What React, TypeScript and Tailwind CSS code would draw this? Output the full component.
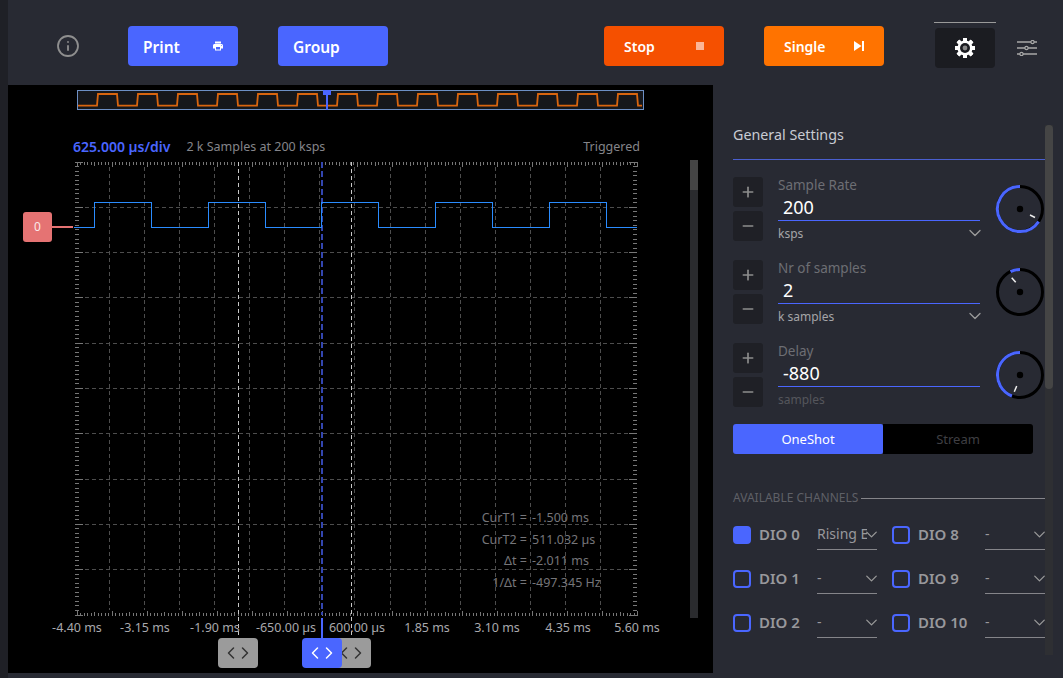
import { ChevronDown, ChevronLeft, ChevronRight, Info, Minus, Plus } from "lucide-react";
import { MdPrint } from "react-icons/md";

const font = "font-['Noto_Sans','Open_Sans',sans-serif]";

const pulseEdges = [94.5, 151.5, 208.5, 265.5, 321.5, 378.5, 435.5, 492.5, 549.5, 606.5];
const tracePath = () => {
  let d = "M74 227.5";
  pulseEdges.forEach((x, i) => {
    d += ` H${x} V${i % 2 === 0 ? 202.5 : 227.5}`;
  });
  return d + " H637";
};

const miniPath = () => {
  let d = "M78 105.7 H97";
  for (let x = 97; x < 640; x += 40) {
    d += ` L${x + 1} 94 H${x + 20} L${x + 21} 105.7 H${Math.min(x + 40, 642)}`;
  }
  return d;
};

const range = (from: number, to: number, step: number) => {
  const out: number[] = [];
  for (let v = from; v <= to + 0.01; v += step) out.push(v);
  return out;
};

const axisLabels = [
  { text: "-4.40 ms", nudge: "" },
  { text: "-3.15 ms", nudge: "-translate-x-[2px]" },
  { text: "-1.90 ms", nudge: "-translate-x-[2px]" },
  { text: "-650.00 µs", nudge: "-translate-x-px" },
  { text: "600.00 µs", nudge: "" },
  { text: "1.85 ms", nudge: "" },
  { text: "3.10 ms", nudge: "" },
  { text: "4.35 ms", nudge: "translate-x-px" },
  { text: "5.60 ms", nudge: "" },
];
const readouts = [
  ["CurT1 =", "-1.500 ms"],
  ["CurT2 =", "511.032 µs"],
  ["Δt =", "-2.011 ms"],
  ["1/Δt =", "-497.345 Hz"],
];

function Chart() {
  const xs = range(74.5, 637, 35.06);
  const ys = range(162, 615, 45.3);
  return (
    <svg width={705} height={480} viewBox="8 160 705 480" className="block">
      <g shapeRendering="crispEdges" fill="none">
        {xs.slice(1, -1).map((x) => (
          <line key={x} x1={x} x2={x} y1={167} y2={610} stroke="#4d4d4d" strokeDasharray="4 3" />
        ))}
        {ys.slice(1, -1).map((y) => (
          <line key={y} x1={78} x2={634} y1={y} y2={y} stroke="#4d4d4d" strokeDasharray="4 3" />
        ))}
        {range(0, 160, 1).map((i) => {
          const x = 77 + i * 3.506;
          const len = i % 10 === 0 ? 5 : i % 5 === 0 ? 4 : 3;
          return (
            <g key={i} stroke="#777">
              <line x1={x} x2={x} y1={162} y2={162 + len} />
              <line x1={x} x2={x} y1={615.5} y2={615.5 - len} />
            </g>
          );
        })}
        {range(0, 100, 1).map((i) => {
          const y = 162 + i * 4.53;
          const len = i % 10 === 0 ? 8 : 4;
          return (
            <g key={i} stroke="#777">
              <line x1={75} x2={75 + len} y1={y} y2={y} />
              <line x1={637} x2={637 - len} y1={y} y2={y} />
            </g>
          );
        })}
        <line x1={238.5} x2={238.5} y1={162} y2={638} stroke="#c8c8c8" strokeDasharray="4 3" />
        <line x1={351.5} x2={351.5} y1={162} y2={638} stroke="#c8c8c8" strokeDasharray="4 3" />
        <line x1={322} x2={322} y1={162} y2={615} stroke="#3346b0" strokeWidth={2} strokeDasharray="6 3" />
        <line x1={322} x2={322} y1={618} y2={638} stroke="#4a66ff" strokeWidth={2} />
      </g>
      <path d={tracePath()} fill="none" stroke="#2a8cff" strokeWidth={1} shapeRendering="crispEdges" />
    </svg>
  );
}

function MiniMap() {
  return (
    <svg width={567} height={20} viewBox="77 90 567 20" className="ml-[69px] block">
      <rect x={77.5} y={90.5} width={566} height={19} fill="#16171b" stroke="#6d8fc4" />
      <path d={miniPath()} fill="none" stroke="#d9650f" strokeWidth={1.8} />
      <rect x={323} y={90} width={8} height={5} fill="#4a66ff" />
      <line x1={327} x2={327} y1={94} y2={110} stroke="#4a66ff" strokeWidth={2} />
    </svg>
  );
}

function Handle({ className }: { className: string }) {
  return (
    <div className={`absolute top-[478px] flex h-[30px] items-center justify-center rounded-[4px] ${className}`}>
      <ChevronLeft size={20} strokeWidth={1.8} />
      <ChevronRight size={20} strokeWidth={1.8} className="-ml-[6px]" />
    </div>
  );
}

function Knob({ from, to, tick }: { from: number; to: number; tick: number[] }) {
  // angles are in degrees clockwise from the top of the dial
  const pt = (a: number) => {
    const r = (a * Math.PI) / 180;
    return `${25 + 22.5 * Math.sin(r)} ${25 - 22.5 * Math.cos(r)}`;
  };
  const large = to - from > 180 ? 1 : 0;
  return (
    <svg width={50} height={50} viewBox="0 0 50 50" className="shrink-0">
      <circle cx={25} cy={25} r={22.5} fill="none" stroke="#000" strokeWidth={3} />
      <path d={`M${pt(from)} A22.5 22.5 0 ${large} 1 ${pt(to)}`} fill="none" stroke="#4a66ff" strokeWidth={3} />
      <circle cx={25} cy={25} r={3.2} fill="#000" />
      <line x1={tick[0]} y1={tick[1]} x2={tick[2]} y2={tick[3]} stroke="#eee" strokeWidth={1.5} />
    </svg>
  );
}

function Stepper() {
  return (
    <div className="flex w-[30px] shrink-0 flex-col gap-1">
      <div className="flex h-[30px] items-center justify-center rounded-[3px] bg-[#1f2026] text-[#8d8d8d]">
        <Plus size={16} strokeWidth={2.5} />
      </div>
      <div className="flex h-[30px] items-center justify-center rounded-[3px] bg-[#1f2026] text-[#8d8d8d]">
        <Minus size={16} strokeWidth={2.5} />
      </div>
    </div>
  );
}

function NumberRow(props: { label: string; value: string; unit: string; dim?: boolean; from: number; to: number; tick: number[] }) {
  return (
    <div className="flex h-[64px] items-start">
      <Stepper />
      <div className="ml-[15px] w-[202px] pt-px">
        <div className="h-[15px] text-[13.5px] leading-[15px] text-[#6d6e74]">{props.label}</div>
        <div className="mt-[1px] h-[27px] border-b border-[#4a66ff] pl-[5px] text-[18px] leading-[26px] text-white">{props.value}</div>
        <div className="mt-[5px] flex h-[16px] items-center justify-between">
          <span className={`text-[12px] ${props.dim ? "text-[#55565c]" : "text-[#a5a5a8]"}`}>{props.unit}</span>
          {!props.dim && <ChevronDown size={20} strokeWidth={1.6} className="-mt-[3px] -mr-[5px] text-[#9a9a9a]" />}
        </div>
      </div>
      <div className="mt-[7px] ml-[15px]">
        <Knob from={props.from} to={props.to} tick={props.tick} />
      </div>
    </div>
  );
}

function Channel({ name, on, trigger, labelWidth }: { name: string; on?: boolean; trigger?: string; labelWidth: string }) {
  return (
    <div className="flex h-[30px] items-center">
      <div className={`size-[18px] shrink-0 rounded-[4px] border-2 border-[#4a66ff] ${on ? "bg-[#4a66ff]" : ""}`} />
      <span className={`ml-2 -mt-[2px] text-[15px] font-semibold whitespace-nowrap text-[#98989c] ${labelWidth}`}>{name}</span>
      <div className="relative flex h-[30px] w-[60px] shrink-0 items-center border-b border-[#85858a] text-[14px] text-[#98989c]">
        <span className="-mt-[2px] w-[50px] overflow-hidden whitespace-nowrap">{trigger ?? "-"}</span>
        <ChevronDown size={19} strokeWidth={1.6} className="absolute top-[5px] -right-[4px] text-[#9a9a9a]" />
      </div>
    </div>
  );
}

function ToolButton({ label, color, className, icon }: { label: string; color: string; className: string; icon?: React.ReactNode }) {
  return (
    <div className={`flex h-10 items-center justify-between rounded-[4px] font-semibold text-white ${color} ${className}`}>
      <span>{label}</span>
      {icon}
    </div>
  );
}

export default function App() {
  return (
    <div className={`flex h-[678px] w-[1063px] overflow-hidden bg-[#282a33] ${font}`}>
      <div className="w-2 shrink-0 bg-[#1f2026]" />
      <div className="flex min-w-0 flex-1 flex-col">
        <header className="flex h-[85px] shrink-0 items-center pt-[7px]">
          <Info size={24} strokeWidth={1.8} className="ml-[48px] text-[#8f8f8f]" />
          <ToolButton
            label="Print"
            color="bg-[#4a66ff]"
            className="ml-[48px] w-[110px] pr-[14px] pl-[15px] text-[15.5px] [&>span]:pt-1"
            icon={<MdPrint size={12} />}
          />
          <ToolButton label="Group" color="bg-[#4a66ff]" className="ml-10 w-[110px] pl-[15px] text-[15.5px] [&>span]:pt-1" />
          <ToolButton
            label="Stop"
            color="bg-[#f55000]"
            className="ml-[216px] w-[120px] pr-5 pl-5 text-[14px]"
            icon={<span className="size-2 bg-[#fbb597]" />}
          />
          <ToolButton
            label="Single"
            color="bg-[#ff7300]"
            className="ml-10 w-[120px] pr-5 pl-5 text-[14px]"
            icon={
              <svg width={10} height={10} viewBox="0 0 10 10" fill="#fff">
                <path d="M0 0 L7.5 5 L0 10 Z" />
                <rect x={8} y={0} width={2} height={10} />
              </svg>
            }
          />
          <div className="-mt-[2px] ml-[50px] flex h-[46px] w-[62px] flex-col items-center border-t border-[#9a9a9a] pt-[5px]">
            <div className="flex h-10 w-[60px] items-center justify-center rounded-[4px] bg-[#1b1c21]">
              <svg width={20} height={20} viewBox="0 0 20 20">
                {[0, 45, 90, 135, 180, 225, 270, 315].map((a) => (
                  <rect key={a} x={8} y={0} width={4} height={20} fill="#fff" transform={`rotate(${a} 10 10)`} rx={0.6} />
                ))}
                <circle cx={10} cy={10} r={7.6} fill="#fff" />
                <circle cx={10} cy={10} r={5} fill="#1b1c21" />
                <circle cx={10} cy={10} r={2.4} fill="#888" />
              </svg>
            </div>
          </div>
          <svg width={20} height={16} viewBox="0 0 20 16" className="mt-[3px] ml-[21px]" stroke="#a8a8a8" fill="none" strokeWidth={1.2}>
            <path d="M0 2 H14 M17 2 H20 M0 8 H8 M11 8 H20 M0 14 H3 M6 14 H20" strokeWidth={1.6} />
            <circle cx={15.5} cy={2} r={1.6} />
            <circle cx={9.5} cy={8} r={1.6} />
            <circle cx={4.5} cy={14} r={1.6} />
          </svg>
        </header>

        <div className="flex min-h-0 flex-1">
          <main className="relative h-[588px] w-[705px] shrink-0 bg-black pt-[5px]">
            <MiniMap />
            <div className="mt-[27px] flex h-5 items-center pr-[73px] pl-[65px] text-[12.5px] leading-5 text-[#85858a]">
              <span className="text-[14px] font-semibold text-[#4a66ff]">625.000 µs/div</span>
              <span className="ml-4">2 k Samples at 200 ksps</span>
              <span className="ml-auto">Triggered</span>
            </div>
            <div className="relative mt-[3px]">
              <Chart />
              <div className="absolute top-[347px] left-[472px] grid grid-cols-[auto_auto] gap-x-[5px] text-[12.5px] leading-[21.7px] text-[#757579]">
                {readouts.map(([k, v]) => (
                  <div key={k} className="contents">
                    <span className="w-[47px] text-right whitespace-nowrap">{k}</span>
                    <span className="whitespace-nowrap">{v}</span>
                  </div>
                ))}
              </div>
              <div className="absolute top-[458px] left-[34px] flex text-[12.5px] leading-5 text-[#a9a9ad]">
                {axisLabels.map((l) => (
                  <span key={l.text} className={`w-[70px] text-center whitespace-nowrap ${l.nudge}`}>
                    {l.text}
                  </span>
                ))}
              </div>
              <Handle className="left-[210px] w-10 bg-[#9b9b9b] text-[#333]" />
              <Handle className="left-[323px] w-10 bg-[#9b9b9b] text-[#333]" />
              <Handle className="left-[294px] w-10 bg-[#4a66ff] text-white" />
            </div>
            <div className="absolute top-[75px] left-[682px] h-[458px] w-2 bg-[#2a2b2e]">
              <div className="h-[30px] w-2 bg-[#444]" />
            </div>
            <div className="absolute top-[127px] left-[15px] flex items-center">
              <div className="flex h-[30px] w-[29px] items-center justify-center rounded-[3px] bg-[#e57373] text-[12px] text-[#fbe9e9]">0</div>
              <div className="h-[2px] w-[21px] bg-[#e57373]" />
            </div>
          </main>

          <aside className="relative flex-1 bg-[#282a33] pl-5">
            <div className="w-[312px] border-b border-[#4a5fd0] pt-[38px] pb-[13px] text-[14.3px] leading-[23px] text-[#c8ccd4]">General Settings</div>
            <div className="mt-[17px] flex flex-col gap-[19px]">
              <NumberRow label="Sample Rate" value="200" unit="ksps" from={-236} to={0} tick={[35, 31, 40, 33.5]} />
              <NumberRow label="Nr of samples" value="2" unit="k samples" from={-25} to={0} tick={[16.7, 10.7, 20.7, 15.3]} />
              <NumberRow label="Delay" value="-880" unit="samples" dim from={-159} to={0} tick={[21.7, 36, 19.3, 41.7]} />
            </div>
            <div className="mt-[17px] flex h-[30px] w-[300px] text-[13px]">
              <div className="flex w-[150px] items-center justify-center rounded-l-[3px] rounded-r-[2px] bg-[#4a66ff] pt-px text-white">OneShot</div>
              <div className="flex w-[150px] items-center justify-center rounded-r-[3px] bg-black pt-px text-[#3f3f43]">Stream</div>
            </div>
            <div className="mt-[36px] flex h-[16px] w-[312px] items-center text-[12px] whitespace-nowrap text-[#5f6067]">
              AVAILABLE CHANNELS
              <span className="ml-[3px] h-px flex-1 bg-[#85858a]" />
            </div>
            <div className="mt-[14px] grid w-[312px] grid-cols-[159px_153px] gap-y-[14px]">
              <Channel name="DIO 0" on trigger="Rising Edge" labelWidth="w-[58px]" />
              <Channel name="DIO 8" labelWidth="w-[67px]" />
              <Channel name="DIO 1" labelWidth="w-[58px]" />
              <Channel name="DIO 9" labelWidth="w-[67px]" />
              <Channel name="DIO 2" labelWidth="w-[58px]" />
              <Channel name="DIO 10" labelWidth="w-[67px]" />
            </div>
            <div className="absolute top-10 left-[332px] h-[530px] w-2 bg-[#2e2f33]">
              <div className="h-[264px] w-2 rounded-t-[4px] rounded-b-[4px] bg-[#454545]" />
            </div>
          </aside>
        </div>
      </div>
    </div>
  );
}
